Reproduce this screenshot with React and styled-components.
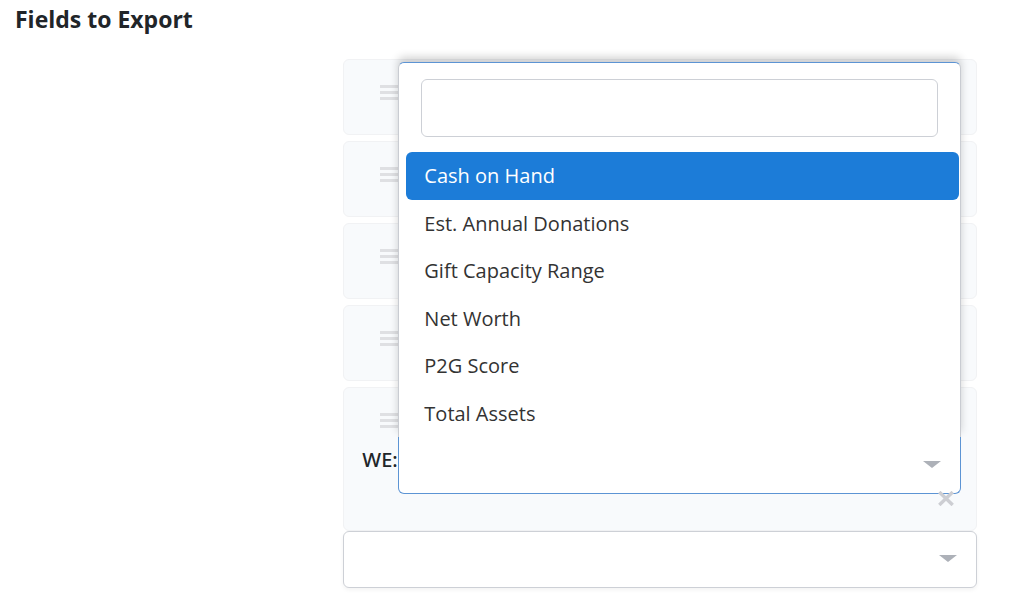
import React, { useState } from 'react'
import styled, { createGlobalStyle, css } from 'styled-components'

const FIELDS = [
  'Cash on Hand',
  'Est. Annual Donations',
  'Gift Capacity Range',
  'Net Worth',
  'P2G Score',
  'Total Assets',
]

const Handle = () => (
  <HandleButton type="button" aria-label="Reorder field">
    <svg width="24" height="15" viewBox="0 0 24 15" fill="#dfe0e3" aria-hidden="true">
      <rect width="24" height="3" />
      <rect y="6" width="24" height="3" />
      <rect y="12" width="24" height="3" />
    </svg>
  </HandleButton>
)

const FieldSelect = ({ id, label, value, onChange, open }) => (
  <SelectWrap>
    <Select id={id} aria-label={label} value={value} onChange={onChange} $open={open}>
      <option value="" aria-label="No field" />
      {FIELDS.map((field) => (
        <option key={field} value={field}>{field}</option>
      ))}
    </Select>
    <Caret width="18" height="7" viewBox="0 0 18 7" aria-hidden="true">
      <path d="M0 0H18L9 7Z" fill="#adb1b8" />
    </Caret>
  </SelectWrap>
)

export default () => {
  const [field, setField] = useState('')
  const [nextField, setNextField] = useState('')
  const [active, setActive] = useState(FIELDS[0])

  return (
    <>
      <GlobalStyle />
      <Page>
        <Title>Fields to Export</Title>
        <Columns>
          <Fields>
            {[1, 2, 3, 4].map((n) => (
              <Card key={n}>
                <Handle />
              </Card>
            ))}
            <Card $expanded>
              <Handle />
              <FieldRow>
                <Label htmlFor="we-field">WE:</Label>
                <Picker>
                  <FieldSelect
                    id="we-field"
                    open
                    value={field}
                    onChange={(e) => setField(e.target.value)}
                  />
                  <Menu>
                    <Search type="text" aria-label="Search fields" />
                    <Options role="listbox" aria-label="Fields">
                      {FIELDS.map((name) => (
                        <Option
                          key={name}
                          role="option"
                          aria-selected={name === active}
                          $active={name === active}
                          onMouseEnter={() => setActive(name)}
                          onClick={() => setField(name)}
                        >
                          {name}
                        </Option>
                      ))}
                    </Options>
                  </Menu>
                  <RemoveButton type="button" aria-label="Remove field">
                    <svg width="16" height="15" viewBox="0 0 16 15" aria-hidden="true">
                      <path
                        d="M1.3 1L14.7 14M14.7 1L1.3 14"
                        stroke="#cdced3"
                        strokeWidth="3.4"
                      />
                    </svg>
                  </RemoveButton>
                </Picker>
              </FieldRow>
            </Card>
          </Fields>
          <FieldSelect
            label="Add a field"
            value={nextField}
            onChange={(e) => setNextField(e.target.value)}
          />
        </Columns>
      </Page>
    </>
  )
}

const GlobalStyle = createGlobalStyle`
  * {
    box-sizing: border-box;
  }

  body {
    margin: 0;
    background: #fff;
    color: #212529;
    font-family: "Open Sans", "Noto Sans", sans-serif;
    font-size: 20px;
  }

  button, input, select {
    font: inherit;
    color: inherit;
  }
`

const Page = styled.main`
  padding: 3px 53px 23px 0;
`

const Title = styled.h1`
  margin: 0 0 24px 15px;
  font-size: 23px;
  font-weight: 700;
  line-height: 32px;
`

const Columns = styled.div`
  margin-left: calc((100% + 53px) / 3);
`

const Fields = styled.div`
  display: flex;
  flex-direction: column;
  gap: 6px;
`

const Card = styled.section`
  height: 76px;
  padding: 25px 15px 0 18px;
  border: 1px solid #f1f2f4;
  border-radius: 6px;
  background: #f8fafc;

  ${({ $expanded }) => $expanded && css`
    height: auto;
    padding-bottom: 36px;
  `}
`

const HandleButton = styled.button`
  display: block;
  margin-left: 18px;
  padding: 0;
  border: 0;
  background: none;
  cursor: grab;

  svg {
    display: block;
  }
`

const FieldRow = styled.div`
  display: flex;
  margin-top: 9px;
`

const Label = styled.label`
  flex: 0 0 36px;
  font-family: "Noto Sans", sans-serif;
  font-weight: 500;
  line-height: 46px;
  white-space: nowrap;
`

const Picker = styled.div`
  position: relative;
  flex: 1;
`

const SelectWrap = styled.div`
  position: relative;
`

const Select = styled.select`
  display: block;
  width: 100%;
  height: 57px;
  padding: 0 48px 0 16px;
  appearance: none;
  border: 1px solid #cdd0d6;
  border-radius: 6px;
  outline: 0;
  background: #fff;
  box-shadow: 0 2px 4px rgba(0, 0, 0, 0.05);

  ${({ $open }) => $open && css`
    border-color: #5c94d4;
    border-top: 0;
    border-radius: 0 0 6px 6px;
    box-shadow: none;
  `}
`

const Caret = styled.svg`
  position: absolute;
  top: 24px;
  right: 20px;
  pointer-events: none;
`

const Menu = styled.div`
  position: absolute;
  right: 0;
  bottom: 100%;
  left: 0;
  display: flex;
  flex-direction: column;
  height: 375px;
  border: 1px solid #c9ccd2;
  border-top-color: #5c94d4;
  border-bottom: 0;
  border-radius: 6px 6px 0 0;
  background: #fff;
  box-shadow: 0 -5px 8px rgba(0, 0, 0, 0.18);
  clip-path: inset(-16px -16px 0);
`

const Search = styled.input`
  flex: 0 0 58px;
  margin: 16px 22px 15px;
  padding: 0 16px;
  border: 1px solid #cdd0d6;
  border-radius: 6px;
  outline: 0;
  background: #fff;
`

const Options = styled.ul`
  display: grid;
  flex: 1;
  grid-auto-rows: 1fr;
  margin: 0;
  padding: 0 1px 0 7px;
  list-style: none;
`

const Option = styled.li`
  padding: 0 18px;
  border-radius: 6px;
  background: ${({ $active }) => ($active ? '#1c7cd8' : 'transparent')};
  color: ${({ $active }) => ($active ? '#fff' : '#333')};
  line-height: 47px;
  cursor: pointer;
`

const RemoveButton = styled.button`
  position: absolute;
  right: 7px;
  bottom: -12px;
  padding: 0;
  border: 0;
  background: none;
  cursor: pointer;

  svg {
    display: block;
  }
`
